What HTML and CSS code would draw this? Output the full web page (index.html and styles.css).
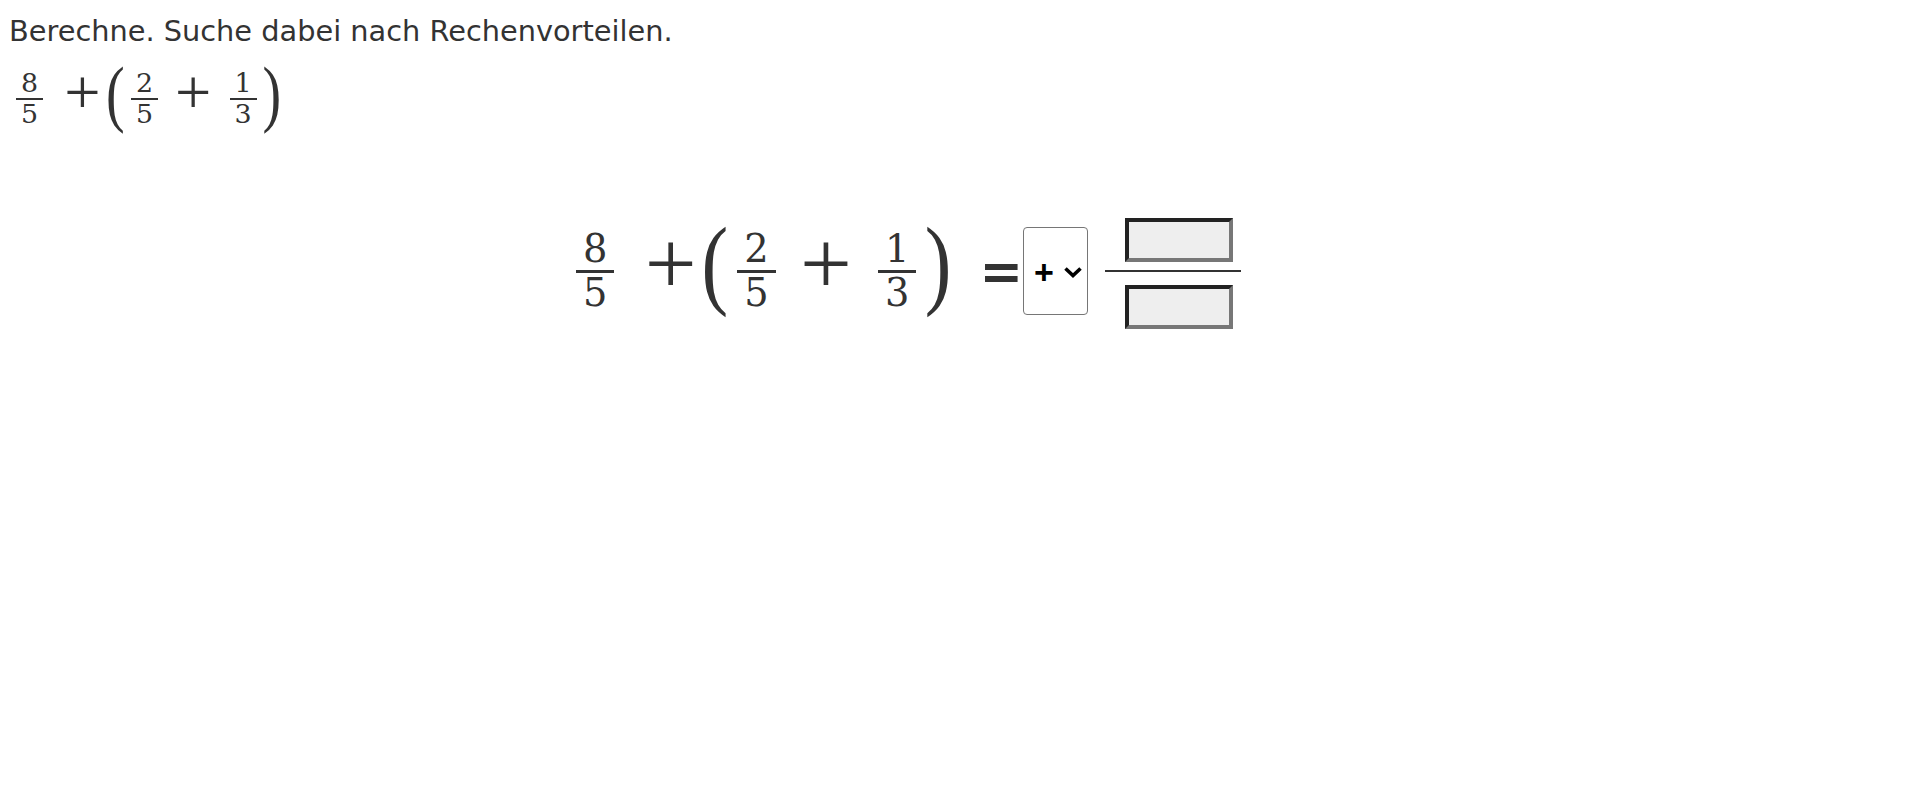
FILE: index.html
```html
<!DOCTYPE html>
<html lang="de">
<head>
<meta charset="utf-8">
<title>Rechenvorteile</title>
<link rel="stylesheet" href="styles.css">
</head>
<body>
<div class="page">
  <p class="prompt">Berechne. Suche dabei nach Rechenvorteilen.</p>
  <div class="math math-small">
    <span class="frac first"><span class="num">8</span><span class="bar"></span><span class="den">5</span></span>
    <span class="op op1">+</span>
    <span class="paren open">(</span>
    <span class="frac f2"><span class="num">2</span><span class="bar"></span><span class="den">5</span></span>
    <span class="op op2">+</span>
    <span class="frac f3"><span class="num">1</span><span class="bar"></span><span class="den">3</span></span>
    <span class="paren close">)</span>
  </div>
  <div class="task">
    <div class="math math-big">
      <span class="frac first"><span class="num">8</span><span class="bar"></span><span class="den">5</span></span>
      <span class="op op1">+</span>
      <span class="paren open">(</span>
      <span class="frac f2"><span class="num">2</span><span class="bar"></span><span class="den">5</span></span>
      <span class="op op2">+</span>
      <span class="frac f3"><span class="num">1</span><span class="bar"></span><span class="den">3</span></span>
      <span class="paren close">)</span>
    </div>
    <span class="eq">=</span>
    <div class="select">
      <span class="sel-val">+</span>
      <svg class="chev" width="20" height="12" viewBox="0 0 20 12"><path d="M2.5 2.5 L10 9.5 L17.5 2.5" fill="none" stroke="#000" stroke-width="3.6" stroke-linejoin="miter"/></svg>
    </div>
    <div class="answer">
      <input class="box" type="text" aria-label="Zähler">
      <span class="ans-line"></span>
      <input class="box" type="text" aria-label="Nenner">
    </div>
  </div>
</div>
</body>
</html>
```
FILE: styles.css
```css
html, body {
  margin: 0;
  padding: 0;
  background: #fff;
}

.page {
  padding: 14px 9px 0 9px;
  color: #333;
}

.prompt {
  margin: 0;
  font-family: "DejaVu Sans", Verdana, sans-serif;
  font-size: 28.8px;
  line-height: normal;
  color: #333;
}

.math {
  display: flex;
  align-items: center;
  font-family: "Liberation Serif", "Times New Roman", serif;
  color: #333;
}

.math-small {
  --u: 28px;
  --bar: 2px;
  --pscale: 1.34;
  --plift: 0.32;
  --popen: 0.2;
  font-size: 28px;
  margin-top: 21px;
}

.math-big {
  --u: 40px;
  --bar: 3px;
  --pscale: 1.23;
  --plift: 0.42;
  --popen: 0.12;
  font-size: 40px;
}

.frac {
  display: inline-flex;
  flex-direction: column;
  align-items: center;
  width: calc(0.96 * var(--u));
}

.frac.first {
  margin-left: calc(0.25 * var(--u));
}

.frac.f2 {
  margin-left: calc(0.23 * var(--u));
}

.frac.f3 {
  margin-left: calc(0.65 * var(--u));
}

.num, .den {
  display: block;
  font-family: "DejaVu Serif", "Liberation Serif", serif;
  font-size: calc(0.96 * var(--u));
  line-height: calc(1 * var(--u));
  height: var(--u);
}

.num {
  padding-bottom: calc(0.02 * var(--u));
}

.bar {
  display: block;
  width: 100%;
  height: var(--bar);
  background: #333;
}

.op {
  font-size: calc(2.3 * var(--u));
  line-height: 0.5;
  margin-bottom: calc(0.4 * var(--u));
}

.op1 {
  margin-left: calc(0.76 * var(--u));
}

.op2 {
  margin-left: calc(0.61 * var(--u));
}

.paren {
  font-size: calc(2 * var(--u));
  line-height: 0.8;
  transform: scaleY(var(--pscale));
  margin-bottom: calc(var(--plift) * var(--u));
}

.paren.open {
  margin-left: calc(var(--popen) * var(--u));
}

.paren.close {
  margin-left: calc(0.21 * var(--u));
}

.task {
  display: flex;
  align-items: center;
  margin-top: 86px;
  padding-left: 557px;
}

.eq {
  font-family: "DejaVu Sans", sans-serif;
  font-weight: bold;
  font-size: 52px;
  line-height: 1;
  color: #333;
  margin-left: 28px;
}

.select {
  display: flex;
  align-items: center;
  box-sizing: border-box;
  width: 65px;
  height: 88px;
  padding-left: 10px;
  border: 1px solid #767676;
  border-radius: 4px;
  background: #fff;
}

.sel-val {
  font-family: "Liberation Sans", Arial, sans-serif;
  font-weight: bold;
  font-size: 34px;
  line-height: 1;
  color: #000;
  margin-top: 2px;
}

.chev {
  display: block;
  margin-left: 9px;
  margin-top: 2px;
}

.answer {
  display: flex;
  flex-direction: column;
  align-items: flex-start;
  width: 136px;
  margin-left: 17px;
  margin-top: 4px;
}

.box {
  display: block;
  box-sizing: border-box;
  width: 108px;
  height: 44px;
  margin: 0 0 0 20px;
  padding: 0;
  border-style: solid;
  border-width: 4px;
  border-color: #222 #777 #777 #222;
  background: #eee;
  outline: none;
}

.ans-line {
  display: block;
  width: 100%;
  height: 2px;
  background: #333;
  margin: 8px 0 13px 0;
}
```
